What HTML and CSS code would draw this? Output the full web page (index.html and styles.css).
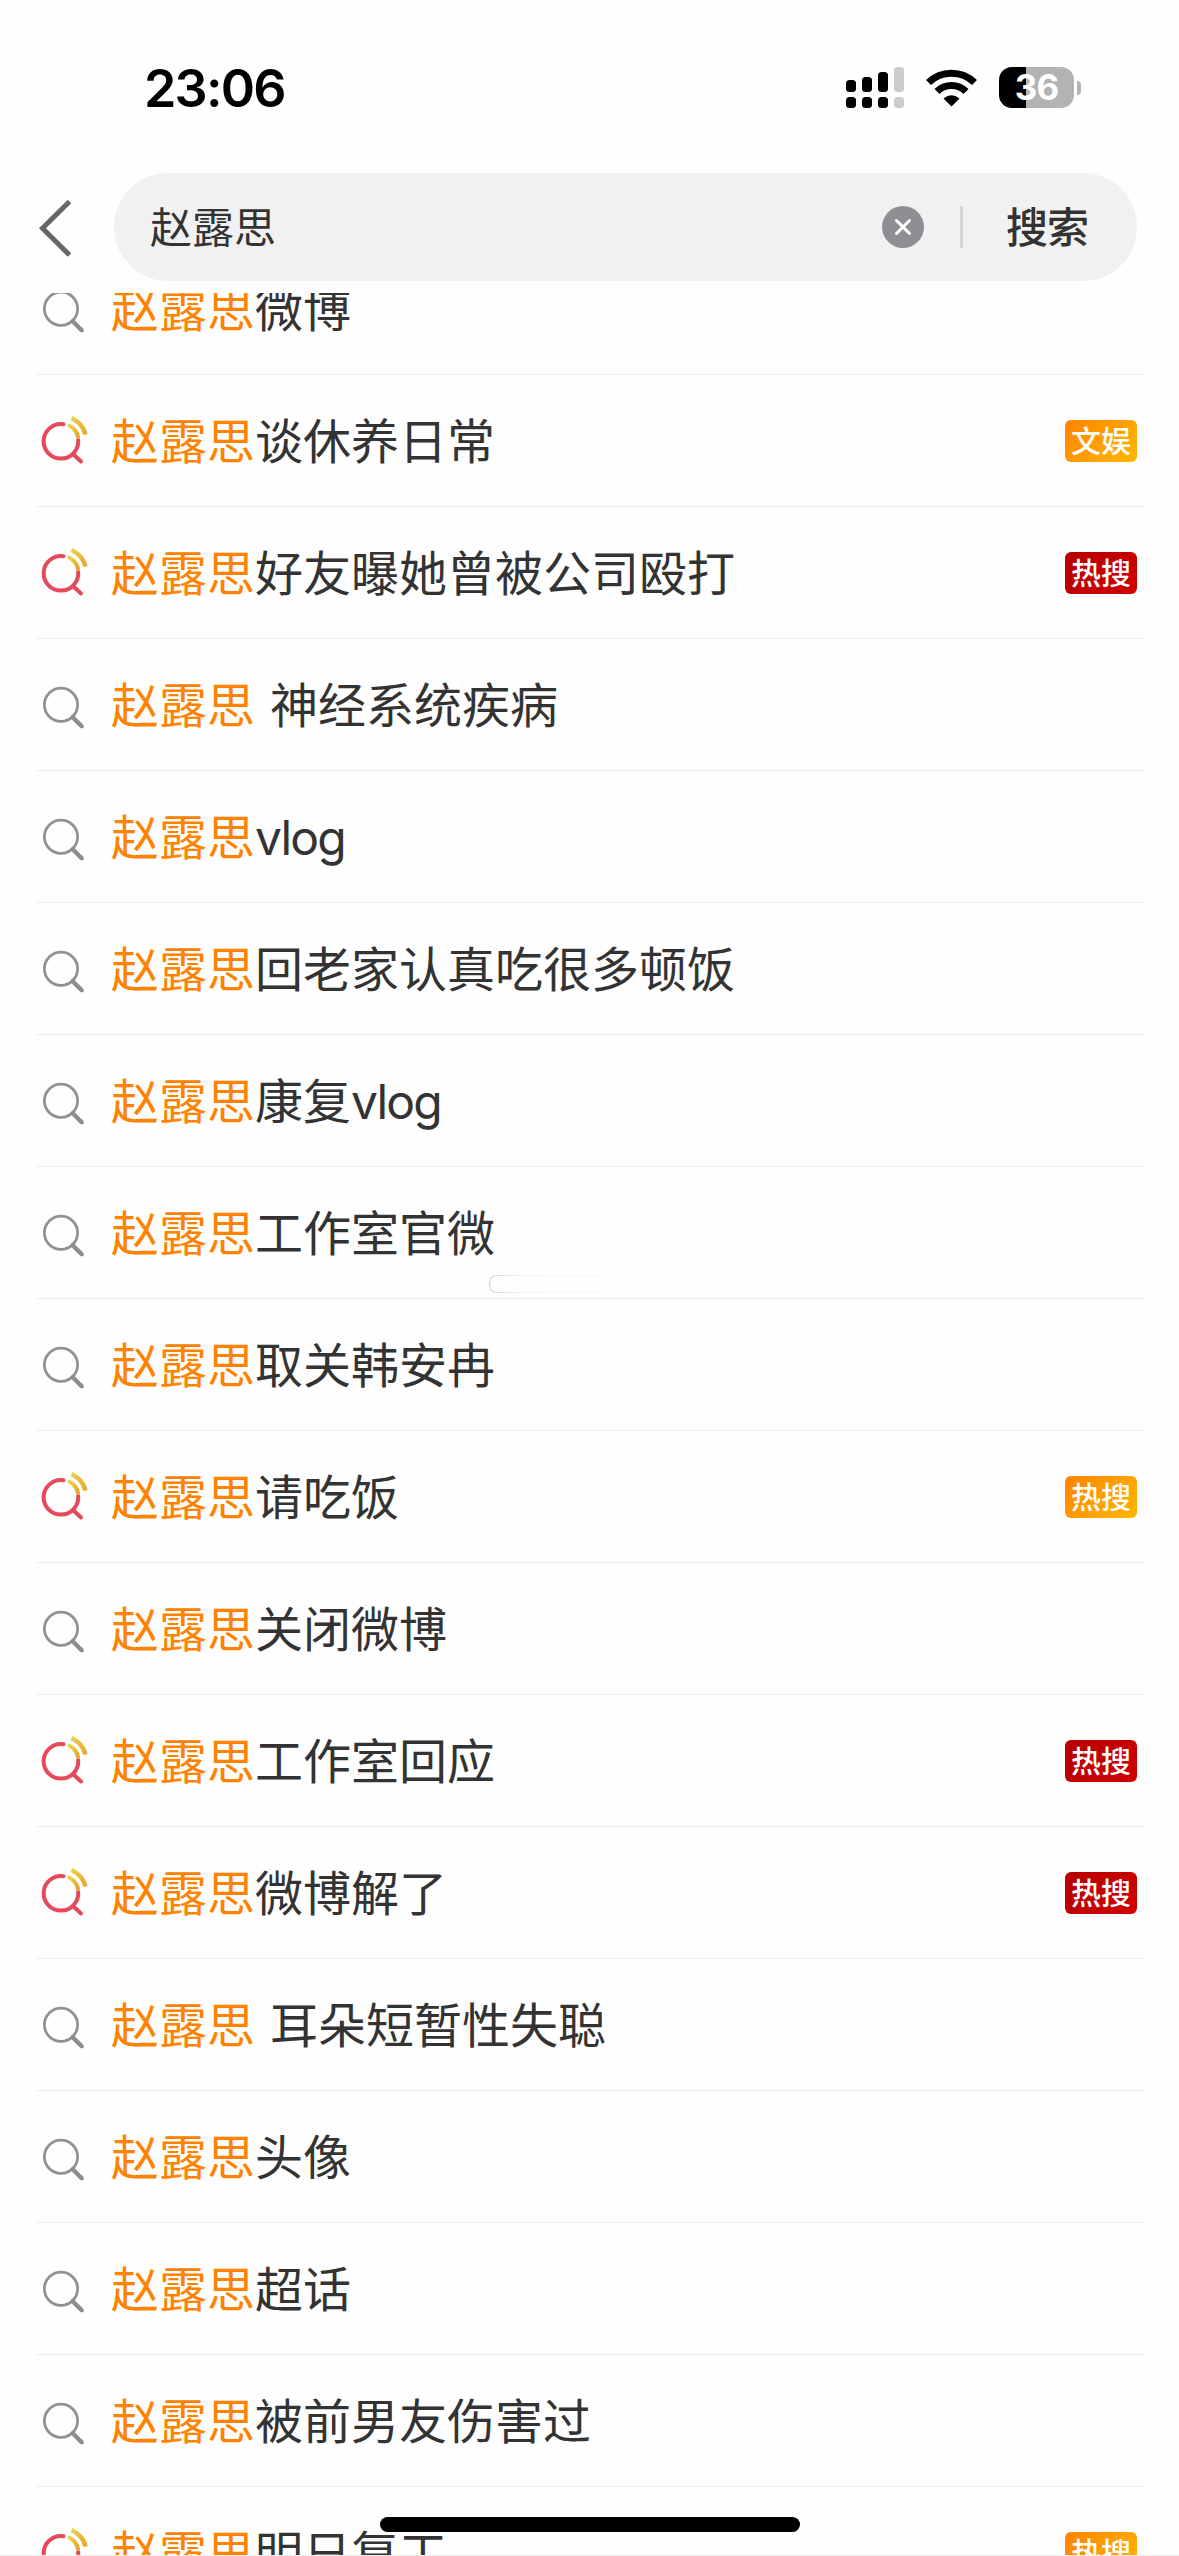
FILE: index.html
```html
<!DOCTYPE html>
<html lang="zh-CN">
<head>
<meta charset="utf-8">
<title>搜索</title>
<link rel="stylesheet" href="styles.css">
</head>
<body>
<svg class="defs" aria-hidden="true">
  <defs>
    <linearGradient id="wave" x1="0" y1="0" x2="1" y2="1"><stop offset="0" stop-color="#ead24a"/><stop offset="1" stop-color="#e6a52e"/></linearGradient>
    <symbol id="search" viewBox="0 0 54 54">
      <circle cx="25" cy="26.700" r="16.600" fill="none" stroke="#919191" stroke-width="2.800"/>
      <path d="M36.700 39.200 45.700 48.200" stroke="#8c8c8c" stroke-width="4.400" stroke-linecap="round"/>
    </symbol>
    <symbol id="hot" viewBox="0 0 54 54">
      <path d="M27.500 10.200A17.300 17.300 0 1 0 42.200 26" fill="none" stroke="#e5495b" stroke-width="4" stroke-linecap="round"/>
      <path d="M37.500 40.500 45 47.500" stroke="#e5495b" stroke-width="4" stroke-linecap="round"/>
      <path d="M33.500 11.800Q40.500 15.500 42 23" fill="none" stroke="url(#wave)" stroke-width="4" stroke-linecap="round"/>
      <path d="M35.500 4Q47 9.500 49.500 20.500" fill="none" stroke="url(#wave)" stroke-width="4.500"/>
    </symbol>
  </defs>
</svg>
<div class="screen">
  <header class="top">
    <div class="status">
      <span class="time">23:06</span>
      <div class="indicators">
        <svg class="signal" viewBox="0 0 58 42">
          <g fill="#000"><rect y="13" width="10" height="12" rx="3.500"/><rect x="16" y="10" width="10" height="15" rx="3.500"/><rect x="32" y="5" width="10" height="20" rx="3.500"/><rect y="30" width="10" height="11" rx="3.500"/><rect x="16" y="30" width="10" height="11" rx="3.500"/><rect x="32" y="30" width="10" height="11" rx="3.500"/></g>
          <g fill="#ccc"><rect x="48" width="10" height="25" rx="3.500"/><rect x="48" y="30" width="10" height="11" rx="3.500"/></g>
        </svg>
        <svg class="wifi" viewBox="0 0 51 38">
          <path d="M2.500 13.500A33 33 0 0 1 48.500 13.500" fill="none" stroke="#000" stroke-width="7"/>
          <path d="M11 22.500A20.500 20.500 0 0 1 40 22.500" fill="none" stroke="#000" stroke-width="7"/>
          <path d="M17.500 29.500Q25.500 23 33.500 29.500L25.500 37.500Z"/>
        </svg>
        <div class="battery"><span class="level">36</span><i class="cap"></i></div>
      </div>
    </div>
    <div class="bar">
      <svg class="back" viewBox="0 0 36 60"><path d="M33.500 4.500 6.500 31.300 33.500 58" fill="none" stroke="#666" stroke-width="5"/></svg>
      <div class="field">
        <span class="query">赵露思</span>
        <svg class="clear" viewBox="0 0 42 42"><circle cx="21" cy="21" r="21" fill="#8e8e93"/><path d="M14.500 14.500 27.500 27.500M27.500 14.500 14.500 27.500" stroke="#fff" stroke-width="3" stroke-linecap="round"/></svg>
        <i class="divider"></i>
        <span class="submit">搜索</span>
      </div>
    </div>
  </header>
  <main class="results">
    <ul class="list">
      <li class="row"><svg class="icon"><use href="#search"/></svg><span class="text"><em>赵露思</em>微博</span></li>
      <li class="row"><svg class="icon"><use href="#hot"/></svg><span class="text"><em>赵露思</em>谈休养日常</span><b class="tag">文娱</b></li>
      <li class="row"><svg class="icon"><use href="#hot"/></svg><span class="text"><em>赵露思</em>好友曝她曾被公司殴打</span><b class="tag red">热搜</b></li>
      <li class="row"><svg class="icon"><use href="#search"/></svg><span class="text spaced"><em>赵露思</em> 神经系统疾病</span></li>
      <li class="row"><svg class="icon"><use href="#search"/></svg><span class="text"><em>赵露思</em><span class="latin">vlog</span></span></li>
      <li class="row"><svg class="icon"><use href="#search"/></svg><span class="text"><em>赵露思</em>回老家认真吃很多顿饭</span></li>
      <li class="row"><svg class="icon"><use href="#search"/></svg><span class="text"><em>赵露思</em>康复<span class="latin">vlog</span></span></li>
      <li class="row"><svg class="icon"><use href="#search"/></svg><span class="text"><em>赵露思</em>工作室官微</span><i class="mark"></i></li>
      <li class="row"><svg class="icon"><use href="#search"/></svg><span class="text"><em>赵露思</em>取关韩安冉</span></li>
      <li class="row"><svg class="icon"><use href="#hot"/></svg><span class="text"><em>赵露思</em>请吃饭</span><b class="tag">热搜</b></li>
      <li class="row"><svg class="icon"><use href="#search"/></svg><span class="text"><em>赵露思</em>关闭微博</span></li>
      <li class="row"><svg class="icon"><use href="#hot"/></svg><span class="text"><em>赵露思</em>工作室回应</span><b class="tag red">热搜</b></li>
      <li class="row"><svg class="icon"><use href="#hot"/></svg><span class="text"><em>赵露思</em>微博解了</span><b class="tag red">热搜</b></li>
      <li class="row"><svg class="icon"><use href="#search"/></svg><span class="text spaced"><em>赵露思</em> 耳朵短暂性失聪</span></li>
      <li class="row"><svg class="icon"><use href="#search"/></svg><span class="text"><em>赵露思</em>头像</span></li>
      <li class="row"><svg class="icon"><use href="#search"/></svg><span class="text"><em>赵露思</em>超话</span></li>
      <li class="row"><svg class="icon"><use href="#search"/></svg><span class="text"><em>赵露思</em>被前男友伤害过</span></li>
      <li class="row"><svg class="icon"><use href="#hot"/></svg><span class="text"><em>赵露思</em>明日复工</span><b class="tag">热搜</b></li>
    </ul>
  </main>
  <i class="home"></i>
</div>
</body>
</html>
```
FILE: styles.css
```css
* { box-sizing: border-box; }
body {
  margin: 0;
  background: #fefefe;
  color: #333;
  font-family: Inter, "Noto Sans CJK SC", sans-serif;
}
.defs { position: absolute; width: 0; height: 0; }
.screen {
  position: relative;
  display: flex;
  flex-direction: column;
  width: 1179px;
  height: 2556px;
  overflow: hidden;
  border-bottom: 1px solid #eee;
}
.top { flex: none; height: 293px; }
.status {
  display: flex;
  justify-content: space-between;
  height: 173px;
  padding: 67px 98px 0 144px;
}
.time {
  height: 44px;
  color: #000;
  font-size: 52px;
  font-weight: 600;
  line-height: 44px;
  letter-spacing: -1.8px;
}
.indicators { display: flex; height: 42px; }
.signal { width: 58px; height: 42px; margin-right: 22px; }
.wifi { width: 51px; height: 38px; margin: 2px 22px 0 0; }
.battery {
  position: relative;
  width: 75px;
  height: 41px;
  margin-right: 7px;
  border-radius: 13px;
  background: linear-gradient(90deg, #000 27px, #b3b3b3 27px);
  text-align: center;
}
.level {
  color: #fff;
  font-size: 35px;
  font-weight: 700;
  line-height: 41px;
  letter-spacing: -1px;
}
.cap {
  position: absolute;
  top: 14px;
  right: -7px;
  width: 4px;
  height: 14px;
  border-radius: 0 5px 5px 0;
  background: #b3b3b3;
}
.bar { display: flex; align-items: center; height: 108px; padding: 0 42px 0 36px; }
.back { width: 36px; height: 60px; margin-right: 42px; }
.field {
  display: flex;
  flex: 1;
  align-items: center;
  height: 108px;
  padding: 0 50px 0 36px;
  border-radius: 54px;
  background: #f1f1f1;
  font-size: 42px;
  line-height: 60px;
}
.query { flex: 1; padding-top: 2px; }
.clear { width: 42px; height: 42px; margin-right: 36px; }
.divider { width: 3px; height: 42px; margin-right: 43px; background: #d6d6d6; }
.submit { padding-top: 2px; font-weight: 500; letter-spacing: -1px; margin-right: -1px; }
.results { flex: 1; min-height: 0; overflow: hidden; }
.list { margin: -50px 35px 0 36px; padding: 0; list-style: none; }
.row {
  position: relative;
  display: flex;
  align-items: center;
  height: 132px;
  padding-right: 7px;
  border-bottom: 1px solid #ededed;
}
.icon { width: 54px; height: 54px; margin-right: 21px; }
.text { flex: 1; padding-top: 2px; font-size: 48px; line-height: 70px; white-space: pre; }
.text em { color: #ff8200; font-style: normal; }
.spaced { word-spacing: 1.5px; }
.latin { letter-spacing: -1.8px; }
.tag {
  width: 72px;
  height: 42px;
  border-radius: 6px;
  background: linear-gradient(135deg, #ff8400, #ffb700);
  color: #fff;
  font-size: 30px;
  font-weight: 500;
  line-height: 43px;
  text-align: center;
}
.tag.red { background: linear-gradient(135deg, #b40003, #d30000); }
.mark {
  position: absolute;
  top: 108px;
  left: 453px;
  width: 200px;
  height: 18px;
  border: 1px solid #ccc;
  border-right: 0;
  border-radius: 8px 0 0 8px;
  -webkit-mask-image: linear-gradient(90deg, #000, rgba(0, 0, 0, 0.25) 12%, transparent);
  mask-image: linear-gradient(90deg, #000, rgba(0, 0, 0, 0.25) 12%, transparent);
}
.home {
  position: absolute;
  left: 380px;
  bottom: 23px;
  width: 420px;
  height: 15px;
  border-radius: 8px;
  background: #000;
}
```
